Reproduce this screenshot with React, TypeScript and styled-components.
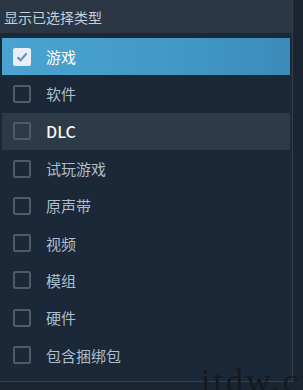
import React from "react";
import styled, { createGlobalStyle } from "styled-components";

const Global = createGlobalStyle`
  html, body { margin: 0; padding: 0; background: #1b2532; }
  body { width: 303px; height: 390px; overflow: hidden; font-family: "Noto Sans CJK SC", "Noto Sans", sans-serif; }
`;

const Page = styled.div`
  position: relative;
  width: 303px;
  height: 390px;
  display: flex;
  overflow: hidden;
  background: #1b2532;
`;

const Panel = styled.div`
  width: 292px;
  height: 381px;
  display: flex;
  flex-direction: column;
  background: #1b2838;
  border-right: 1px solid #33414f;
  border-bottom: 1px solid #33414f;
`;

const Header = styled.div`
  height: 33px;
  display: flex;
  align-items: center;
  padding-left: 4px;
  background: #2a3644;
  color: #c3cfda;
  font-size: 14px;
`;

const List = styled.div`
  display: flex;
  flex-direction: column;
  padding: 5px 2px 0 2px;
`;

const Row = styled.div<{ $state?: "selected" | "hover" }>`
  height: 37.3px;
  display: flex;
  align-items: center;
  padding-left: 11px;
  gap: 15px;
  font-size: 15px;
  color: ${(p) => (p.$state === "selected" ? "#ffffff" : p.$state === "hover" ? "#f2f5f8" : "#adbfcd")};
  background: ${(p) =>
    p.$state === "selected"
      ? "linear-gradient(90deg, #4aa3d0 0%, #4299c6 60%, #3b8bb9 100%)"
      : p.$state === "hover"
      ? "#2d3a47"
      : "transparent"};
`;

const Box = styled.div<{ $checked?: boolean }>`
  width: 18px;
  height: 18px;
  box-sizing: border-box;
  border-radius: 2px;
  display: flex;
  align-items: center;
  justify-content: center;
  border: ${(p) => (p.$checked ? "none" : "2px solid #4f5a65")};
  background: ${(p) => (p.$checked ? "#e8eef3" : "transparent")};
`;

const Label = styled.span<{ $latin?: boolean }>`
  line-height: 1;
  font-size: ${(p) => (p.$latin ? "16px" : "15px")};
  font-weight: ${(p) => (p.$latin ? 500 : 400)};
  font-family: "Noto Sans CJK SC", "Noto Sans", sans-serif;
`;

const Watermark = styled.div`
  position: absolute;
  left: 201px;
  top: 364px;
  line-height: 1;
  white-space: nowrap;
  font-family: "Liberation Serif", serif;
  font-size: 34px;
  color: #15191d;
  letter-spacing: 3px;
`;

const items = ["游戏", "软件", "DLC", "试玩游戏", "原声带", "视频", "模组", "硬件", "包含捆绑包"];

export default function App() {
  return (
    <Page>
      <Global />
      <Panel>
        <Header>显示已选择类型</Header>
        <List>
          {items.map((it, i) => {
            const state = i === 0 ? "selected" : i === 2 ? "hover" : undefined;
            return (
              <Row key={it} $state={state}>
                <Box $checked={i === 0}>
                  {i === 0 && (
                    <svg width="14" height="14" viewBox="0 0 14 14">
                      <path d="M2.5 7.2 L5.6 10.2 L11.6 3.4" fill="none" stroke="#5a8fb6" strokeWidth="2" />
                    </svg>
                  )}
                </Box>
                <Label $latin={it === "DLC"}>{it}</Label>
              </Row>
            );
          })}
        </List>
      </Panel>
      <Watermark>itdw.cn</Watermark>
    </Page>
  );
}
